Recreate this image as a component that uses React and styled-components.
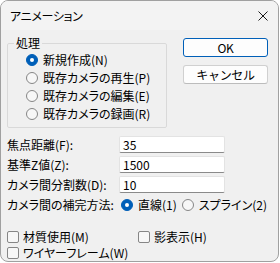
import React from "react";
import styled, { createGlobalStyle } from "styled-components";

const Global = createGlobalStyle`
  html, body { margin: 0; padding: 0; background: #ffffff; }
  body {
    font-family: "Noto Sans CJK JP", "Noto Sans", sans-serif;
    font-size: 12px;
    color: #000;
    font-feature-settings: "palt";
  }
  * { box-sizing: border-box; }
`;

const Window = styled.div`
  width: 279px;
  height: 262px;
  border: 1px solid #a0a0a0;
  border-radius: 8px;
  overflow: hidden;
  background: #f0f0f0;
  display: flex;
  flex-direction: column;
`;

const TitleBar = styled.div`
  height: 29px;
  flex: none;
  display: flex;
  align-items: center;
  justify-content: space-between;
  padding: 0 8px 0 9px;
  background: #f3f3f3;
`;

const Title = styled.span`
  font-size: 12px;
  line-height: 14px;
  letter-spacing: -0.3px;
`;

const CloseIcon = styled.svg`
  width: 12px;
  height: 12px;
  margin-right: 1px;
`;

const Body = styled.div`
  padding: 6px 10px 0 6px;
  display: flex;
  flex-direction: column;
`;

const TopRow = styled.div`
  display: flex;
  align-items: flex-start;
`;

const GroupBox = styled.fieldset`
  width: 160px;
  margin: 0;
  padding: 1px 0 4px 0;
  border: 1px solid #d9d9d9;
  border-radius: 2px;
  min-width: 0;
`;

const Legend = styled.legend`
  margin-left: 6px;
  padding: 0 2px;
  font-size: 12px;
  line-height: 14px;
`;

const RadioList = styled.div`
  display: flex;
  flex-direction: column;
  padding-left: 18px;
`;

const RadioLabel = styled.label`
  display: flex;
  align-items: center;
  height: 18px;
  gap: 5px;
  line-height: 14px;
  white-space: nowrap;
`;

const RadioDot = styled.span`
  width: 12px;
  height: 12px;
  border-radius: 50%;
  flex: none;
  background: ${(p) => (p.$checked ? "#005fb8" : "#f7f7f7")};
  border: 1px solid ${(p) => (p.$checked ? "#005fb8" : "#868686")};
  display: flex;
  align-items: center;
  justify-content: center;
  &::after {
    content: "";
    display: ${(p) => (p.$checked ? "block" : "none")};
    width: 4px;
    height: 4px;
    border-radius: 50%;
    background: #ffffff;
  }
`;

const ButtonColumn = styled.div`
  margin-left: auto;
  padding-top: 2px;
  display: flex;
  flex-direction: column;
  gap: 8px;
`;

const Button = styled.button`
  width: 85px;
  height: 19px;
  padding: 0;
  font-family: inherit;
  font-size: 12px;
  line-height: 14px;
  color: #000;
  background: #fdfdfd;
  border: 1px solid ${(p) => (p.$primary ? "#005fb8" : "#d0d0d0")};
  border-bottom-color: ${(p) => (p.$primary ? "#005fb8" : "#bcbcbc")};
  border-radius: 3px;
  letter-spacing: -0.3px;
`;

const FormRows = styled.div`
  margin-top: 8px;
  display: flex;
  flex-direction: column;
  gap: 3px;
`;

const FieldRow = styled.div`
  display: flex;
  align-items: center;
`;

const FieldLabel = styled.span`
  width: 112px;
  flex: none;
  line-height: 14px;
  white-space: nowrap;
`;

const Input = styled.div`
  width: 106px;
  height: 17px;
  background: #ffffff;
  border: 1px solid #e3e3e3;
  border-bottom: 1px solid #8a8a8a;
  border-radius: 2px;
  padding: 0 3px;
  display: flex;
  align-items: center;
  line-height: 14px;
`;

const MethodRow = styled.div`
  margin-top: 3px;
  height: 18px;
  display: flex;
  align-items: center;
`;

const MethodLabel = styled.span`
  width: 114px;
  flex: none;
  line-height: 14px;
  white-space: nowrap;
`;

const MethodOptions = styled.div`
  display: flex;
  align-items: center;
  gap: 5px;
`;

const CheckGrid = styled.div`
  margin-top: 15px;
  display: grid;
  grid-template-columns: 131px auto;
  grid-auto-rows: 16px;
`;

const CheckLabel = styled.label`
  display: flex;
  align-items: center;
  gap: 4px;
  line-height: 14px;
  white-space: nowrap;
`;

const CheckBox = styled.span`
  width: 12px;
  height: 12px;
  flex: none;
  border: 1px solid #868686;
  border-radius: 2px;
  background: #f7f7f7;
`;

const Radio = ({ checked, children }) => (
  <RadioLabel>
    <RadioDot $checked={checked} />
    <span>{children}</span>
  </RadioLabel>
);

const Check = ({ children }) => (
  <CheckLabel>
    <CheckBox />
    <span>{children}</span>
  </CheckLabel>
);

export default function App() {
  return (
    <>
      <Global />
      <Window>
        <TitleBar>
          <Title>アニメーション</Title>
          <CloseIcon viewBox="0 0 12 12">
            <path d="M1.5 1.5 L10.5 10.5 M10.5 1.5 L1.5 10.5" stroke="#1a1a1a" strokeWidth="1" fill="none" />
          </CloseIcon>
        </TitleBar>
        <Body>
          <TopRow>
            <GroupBox>
              <Legend>処理</Legend>
              <RadioList>
                <Radio checked>新規作成(N)</Radio>
                <Radio>既存カメラの再生(P)</Radio>
                <Radio>既存カメラの編集(E)</Radio>
                <Radio>既存カメラの録画(R)</Radio>
              </RadioList>
            </GroupBox>
            <ButtonColumn>
              <Button $primary>OK</Button>
              <Button>キャンセル</Button>
            </ButtonColumn>
          </TopRow>
          <FormRows>
            <FieldRow>
              <FieldLabel>焦点距離(F):</FieldLabel>
              <Input>35</Input>
            </FieldRow>
            <FieldRow>
              <FieldLabel>基準Z値(Z):</FieldLabel>
              <Input>1500</Input>
            </FieldRow>
            <FieldRow>
              <FieldLabel>カメラ間分割数(D):</FieldLabel>
              <Input>10</Input>
            </FieldRow>
          </FormRows>
          <MethodRow>
            <MethodLabel>カメラ間の補完方法:</MethodLabel>
            <MethodOptions>
              <Radio checked>直線(1)</Radio>
              <Radio>スプライン(2)</Radio>
            </MethodOptions>
          </MethodRow>
          <CheckGrid>
            <Check>材質使用(M)</Check>
            <Check>影表示(H)</Check>
            <Check>ワイヤーフレーム(W)</Check>
          </CheckGrid>
        </Body>
      </Window>
    </>
  );
}
